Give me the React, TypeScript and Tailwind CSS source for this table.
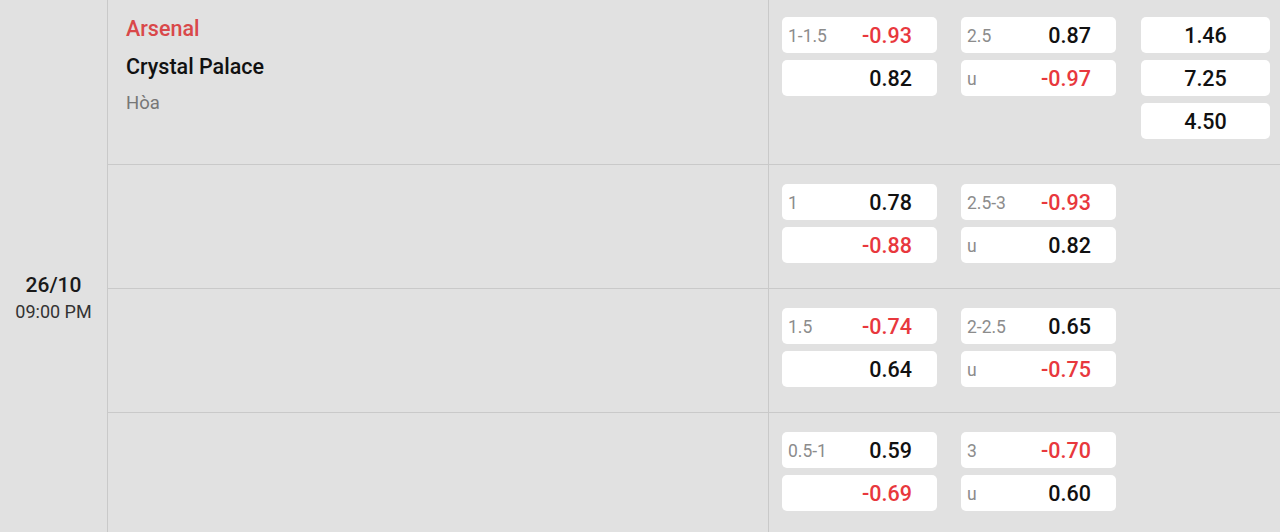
import React from "react";

type Cell = { label?: string; value: string; neg?: boolean };

const rows: { ah: Cell[]; ou: Cell[]; x12?: string[] }[] = [
  {
    ah: [
      { label: "1-1.5", value: "-0.93", neg: true },
      { value: "0.82" },
    ],
    ou: [
      { label: "2.5", value: "0.87" },
      { label: "u", value: "-0.97", neg: true },
    ],
    x12: ["1.46", "7.25", "4.50"],
  },
  {
    ah: [
      { label: "1", value: "0.78" },
      { value: "-0.88", neg: true },
    ],
    ou: [
      { label: "2.5-3", value: "-0.93", neg: true },
      { label: "u", value: "0.82" },
    ],
  },
  {
    ah: [
      { label: "1.5", value: "-0.74", neg: true },
      { value: "0.64" },
    ],
    ou: [
      { label: "2-2.5", value: "0.65" },
      { label: "u", value: "-0.75", neg: true },
    ],
  },
  {
    ah: [
      { label: "0.5-1", value: "0.59" },
      { value: "-0.69", neg: true },
    ],
    ou: [
      { label: "3", value: "-0.70", neg: true },
      { label: "u", value: "0.60" },
    ],
  },
];

function OddBox({ c }: { c: Cell }) {
  return (
    <div className="w-[155px] h-[36px] bg-white rounded-[5px] flex items-center justify-between pl-[6px] pr-[25px] pt-[2px]">
      <span className="text-[17.5px] text-[#8c8c8c]">{c.label ?? ""}</span>
      <span
        className={`text-[21.5px] font-medium ${c.neg ? "text-[#e8383d]" : "text-[#111111]"}`}
      >
        {c.value}
      </span>
    </div>
  );
}

export default function App() {
  return (
    <div
      className="w-[1280px] h-[532px] overflow-hidden bg-[#e1e1e1] flex"
      style={{ fontFamily: "Roboto, 'Noto Sans', sans-serif" }}
    >
      <div className="w-[108px] shrink-0 border-r border-[#c9c9c9] flex flex-col items-center pt-[273px]">
        <div className="text-[21px] font-medium text-[#1a1a1a] leading-[25px]">26/10</div>
        <div className="text-[18px] text-[#333333] leading-[22px] mt-[3px]">09:00 PM</div>
      </div>
      <div className="flex-1 flex flex-col">
        {rows.map((r, i) => (
          <div
            key={i}
            className={`flex shrink-0 border-b border-[#c9c9c9] ${
              i === 0 ? "h-[165px]" : "h-[124px]"
            }`}
          >
            <div className="w-[661px] shrink-0 border-r border-[#c9c9c9] pl-[18px] pt-[15px]">
              {i === 0 && (
                <>
                  <div className="text-[21.5px] font-medium text-[#d9484a] leading-[28px]">
                    Arsenal
                  </div>
                  <div className="text-[21.5px] font-medium text-[#111111] leading-[28px] mt-[10px]">
                    Crystal Palace
                  </div>
                  <div className="text-[18.5px] text-[#777777] leading-[24px] mt-[10px]">
                    Hòa
                  </div>
                </>
              )}
            </div>
            <div
              className={`flex gap-[24px] pl-[13px] ${i === 0 ? "pt-[17px]" : "pt-[19px]"}`}
            >
              <div className="flex flex-col gap-[7px]">
                {r.ah.map((c, j) => (
                  <OddBox key={j} c={c} />
                ))}
              </div>
              <div className="flex flex-col gap-[7px]">
                {r.ou.map((c, j) => (
                  <OddBox key={j} c={c} />
                ))}
              </div>
              {r.x12 && (
                <div className="flex flex-col gap-[7px] ml-[1px]">
                  {r.x12.map((v, j) => (
                    <div
                      key={j}
                      className="w-[129px] h-[36px] bg-white rounded-[5px] flex items-center justify-center pt-[2px] text-[21.5px] font-medium text-[#111111]"
                    >
                      {v}
                    </div>
                  ))}
                </div>
              )}
            </div>
          </div>
        ))}
      </div>
    </div>
  );
}
